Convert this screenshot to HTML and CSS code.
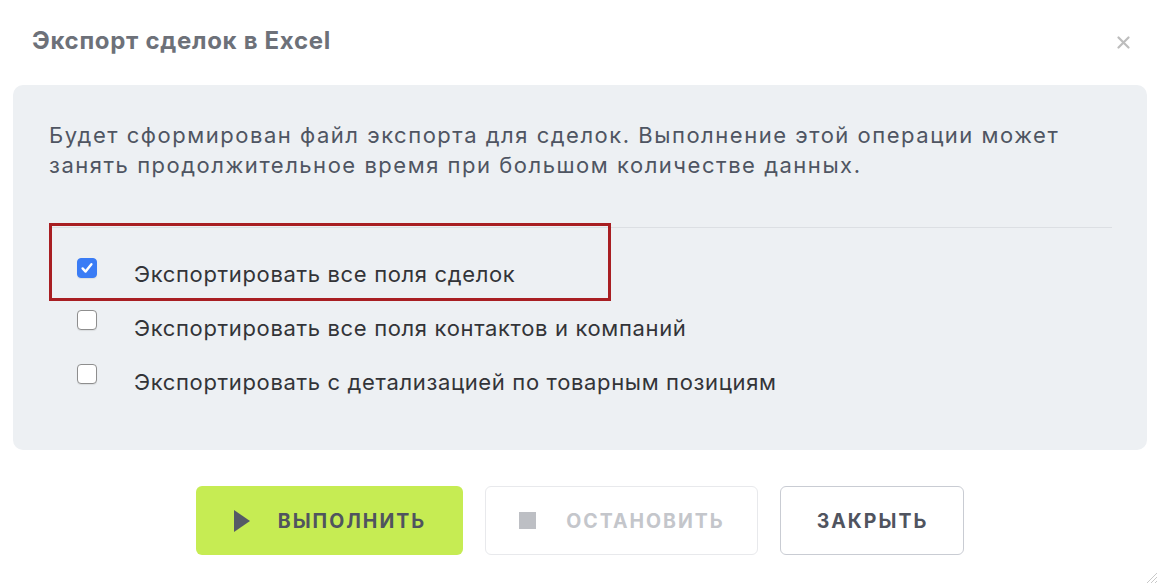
FILE: index.html
```html
<!DOCTYPE html>
<html lang="ru">
<head>
<meta charset="utf-8">
<title>Экспорт сделок в Excel</title>
<link rel="stylesheet" href="styles.css">
</head>
<body>
<div class="dialog">
  <header class="dialog-head">
    <h1 class="dialog-title">Экспорт сделок в Excel</h1>
    <button class="close" type="button" aria-label="Закрыть">
      <svg width="13" height="13" viewBox="0 0 13 13"><path d="M1.5 1.5 L11.5 11.5 M11.5 1.5 L1.5 11.5" stroke="#bdbdbd" stroke-width="2.2" stroke-linecap="round"/></svg>
    </button>
  </header>
  <section class="panel">
    <p class="intro">Будет сформирован файл экспорта для сделок. Выполнение этой операции может занять продолжительное время при большом количестве данных.</p>
    <hr class="sep">
    <div class="options">
      <label class="option option-first">
        <span class="box checked">
          <svg width="20" height="20" viewBox="0 0 20 20"><path d="M5.6 10.4 L8.6 13.6 L14.4 6.2" fill="none" stroke="#fff" stroke-width="2.4" stroke-linecap="round" stroke-linejoin="round"/></svg>
        </span>
        <span class="option-text">Экспортировать все поля сделок</span>
        <span class="highlight"></span>
      </label>
      <label class="option">
        <span class="box"></span>
        <span class="option-text">Экспортировать все поля контактов и компаний</span>
      </label>
      <label class="option">
        <span class="box"></span>
        <span class="option-text">Экспортировать с детализацией по товарным позициям</span>
      </label>
    </div>
  </section>
  <footer class="actions">
    <button class="btn btn-run" type="button">
      <svg class="ico" width="16" height="22" viewBox="0 0 16 22"><path d="M0 0 L16 11 L0 22 Z" fill="#555a66"/></svg>
      <span class="btn-label">Выполнить</span>
    </button>
    <button class="btn btn-stop" type="button">
      <span class="stop-sq"></span>
      <span class="btn-label">Остановить</span>
    </button>
    <button class="btn btn-close" type="button"><span class="btn-label">Закрыть</span></button>
  </footer>
  <svg class="grip" width="14" height="14" viewBox="0 0 14 14"><path d="M13 3 L3 13 M13 7 L7 13 M13 11 L11 13" stroke="#c9c9c9" stroke-width="1"/></svg>
</div>
</body>
</html>
```
FILE: styles.css
```css
* { box-sizing: border-box; }
html, body { margin: 0; padding: 0; background: #fff; }
body {
  font-family: Inter, "Noto Sans", "DejaVu Sans", sans-serif;
  width: 1158px;
  height: 584px;
  overflow: hidden;
}
.dialog {
  position: relative;
  width: 1158px;
  height: 584px;
  display: flex;
  flex-direction: column;
}
.dialog-head {
  height: 85px;
  display: flex;
  align-items: flex-start;
  justify-content: space-between;
  padding: 0 28px 0 32px;
}
.dialog-title {
  margin: 27px 0 0;
  font-size: 24px;
  line-height: 28px;
  font-weight: 700;
  color: #6d7179;
  letter-spacing: 0.7px;
}
.close {
  margin-top: 36px;
  padding: 0;
  border: 0;
  background: none;
  width: 13px;
  height: 13px;
  display: block;
}
.close svg { display: block; }
.panel {
  margin: 0 11px 0 13px;
  height: 365px;
  background: #edf0f3;
  border-radius: 10px;
  padding: 35px 35px 0 36px;
}
.intro {
  margin: 0;
  font-size: 22px;
  line-height: 30px;
  letter-spacing: 1.52px;
  color: #4f5562;
}
.sep {
  margin: 47px 0 0;
  border: 0;
  border-top: 1px solid #dcdfe3;
}
.options {
  display: flex;
  flex-direction: column;
  gap: 24px;
  padding-top: 30px;
}
.option {
  position: relative;
  display: flex;
  align-items: flex-start;
  height: 30px;
}
.box {
  width: 20px;
  height: 20px;
  margin: 0 37px 0 28px;
  border: 1px solid #8e8e8e;
  border-radius: 4px;
  background: #fff;
  box-shadow: 0 1px 1px rgba(0,0,0,0.08);
  flex: none;
}
.box.checked {
  background: #3a7cf5;
  border-color: #3a7cf5;
  position: relative;
}
.box.checked svg { position: absolute; left: -1px; top: -1px; }
.option-text {
  font-size: 22px;
  line-height: 30px;
  letter-spacing: 0.65px;
  color: #333438;
  margin-top: 1px;
}
.option-first .box { margin-top: 0; }
.option:not(.option-first) .box { margin-top: -2px; }
.highlight {
  position: absolute;
  left: 0;
  top: -35px;
  width: 562px;
  height: 78px;
  border: 3px solid #a81e22;
  pointer-events: none;
}
.actions {
  display: flex;
  justify-content: center;
  gap: 22px;
  margin-top: 36px;
  padding-left: 1px;
}
.btn {
  height: 69px;
  border-radius: 6px;
  display: flex;
  align-items: center;
  justify-content: center;
  gap: 28px;
  font-family: Inter, "Noto Sans", sans-serif;
  font-size: 19.5px;
  font-weight: 700;
  text-transform: uppercase;
  letter-spacing: 2px;
  padding: 0;
}
.btn-label { margin-right: -2px; }
.btn-run {
  width: 267px;
  background: #c6ec53;
  border: 0;
  color: #50545f;
}
.btn-stop {
  width: 273px;
  background: #fff;
  border: 1px solid #e8e9ec;
  color: #c4c6cb;
  gap: 30px;
}
.stop-sq {
  width: 17px;
  height: 17px;
  background: #bdbfc4;
  display: block;
}
.btn-close {
  width: 184px;
  background: #fff;
  border: 1px solid #c9ccd3;
  color: #50545f;
}
.ico { display: block; }
.grip {
  position: absolute;
  right: 0;
  bottom: 0;
}
```
